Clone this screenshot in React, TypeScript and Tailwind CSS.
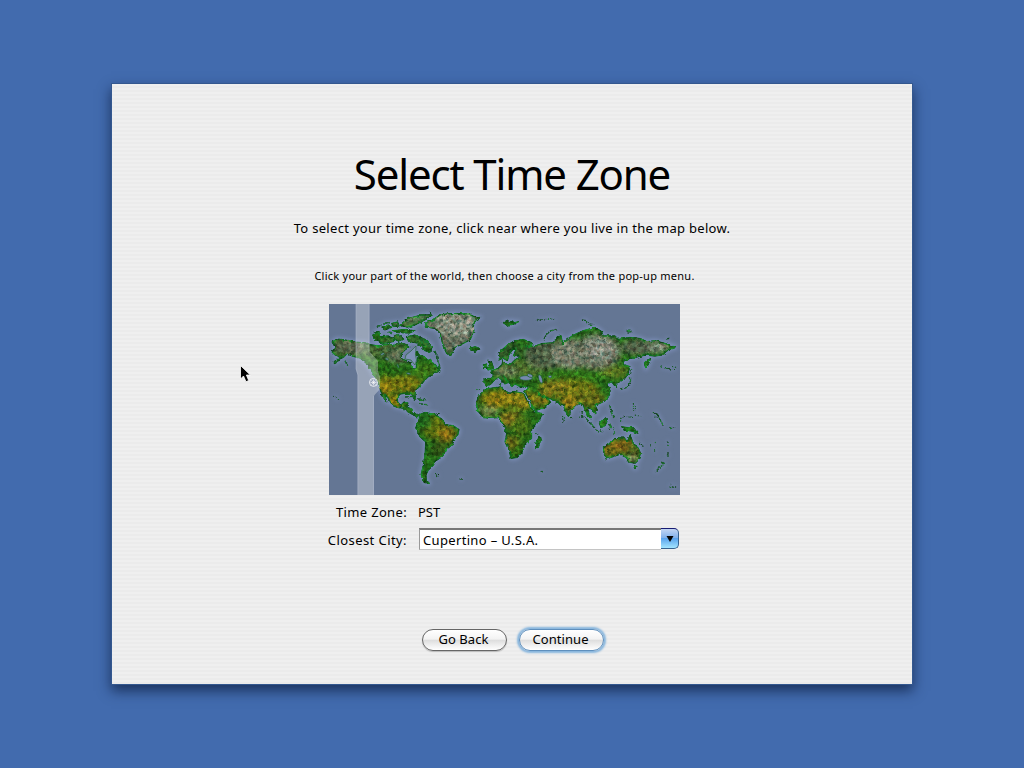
import React from "react";

type Landmass = { t: string; d: string };

const NW = "translate(325 300) scale(.33333)";
const SW = "translate(325 395) scale(.33333)";
const NC = "translate(420 300) scale(.33333)";
const NE = "translate(540 300) scale(.33333)";
const SE = "translate(500 395) scale(.33333)";

const land: Landmass[] = [
  // North and Central America
  { t: "", d: "M332 342L337 339L345 340L355 342L366 343L372 345L380 346L388 344L393 346L398 343L405 344L409 347L405 350L401 354L402 359L407 361L411 363L413 368L416 368L417 361L418 357L421 355L425 357L430 360L434 364L439 368L440 371L434 373L428 377L424 381L420 386L416 390L415 394L416 399L414 399L412 394L407 393L400 394L397 398L398 403L401 405L404 402L408 403L407 407L412 409L413 413L419 415L417 417L408 412L402 408L396 407L391 403L388 398L384 393L386 399L387 402L383 397L380 389L378 382L375 377L370 368L366 363L360 358L352 356L347 354L342 358L335 363L334 363L340 357L335 355L332 352L335 347Z" },
  // Arctic islands
  { t: NW, d: "M245 110L270 105L300 118L322 140L315 157L295 150L280 130L255 125Z" },
  { t: NW, d: "M225 75L250 55L290 45L322 45L300 60L270 75L245 82Z" },
  { t: NW, d: "M143 105L158 97L168 110L188 108L205 115L205 125L175 130L150 122Z" },
  { t: NW, d: "M168 82L190 75L200 82L180 90ZM200 70L218 66L222 78L205 80ZM205 92L240 88L270 92L255 99L215 98ZM208 106L222 104L236 118L222 124L210 118ZM145 100L162 94L163 102ZM265 158L278 154L280 166L266 168Z" },
  // South America
  { t: SW, d: "M285 58L300 52L330 58L350 72L362 88L384 92L402 104L399 118L387 135L382 150L365 162L352 185L337 194L325 210L310 225L303 240L304 256L313 265L297 262L288 240L295 210L300 180L302 140L285 125L272 98L280 80Z" },
  // Greenland, Iceland, Svalbard, British Isles
  { t: NC, d: "M15 70L45 55L60 45L80 42L110 40L150 42L165 52L182 52L165 62L160 80L162 95L150 120L130 130L110 140L100 150L92 168L80 160L70 140L65 120L60 100L45 85L20 82Z" },
  { t: NC, d: "M149 145L165 140L181 146L165 154ZM250 68L260 62L268 68L276 62L282 68L296 65L280 73L272 72L266 80L260 76ZM204 180L214 184L221 205L204 210L209 195ZM190 195L200 192L200 205L191 206Z" },
  // Eurasia
  { t: NC, d: "M192 235L215 235L220 225L213 213L235 205L245 195L248 180L255 192L275 190L287 178L300 172L290 166L280 168L288 148L280 147L268 162L262 183L250 174L238 180L235 160L262 135L285 122L310 118L335 128L330 138L316 140L345 138L368 130L400 128L412 110L424 108L428 135L440 120L460 105L490 92L525 82L545 95L550 108L585 108L595 118L630 112L660 115L680 125L705 122L735 130L768 142L745 150L725 165L705 168L675 165L650 172L630 175L608 185L615 195L630 200L625 222L612 238L590 250L592 260L583 256L575 245L562 252L571 270L568 285L560 300L540 310L525 315L532 330L525 342L515 327L502 323L508 345L514 358L502 345L488 312L475 308L458 325L445 349L435 330L430 315L410 307L390 295L365 287L352 275L368 292L385 297L392 307L370 325L345 332L320 285L312 273L323 268L325 260L300 260L285 252L275 260L262 240L250 228L264 248L255 252L240 234L225 237L215 250L200 260L192 250Z" },
  // Africa
  { t: NC, d: "M190 272L205 265L245 260L250 270L270 280L282 274L311 280L320 300L330 318L343 337L367 340L358 362L335 385L335 415L315 435L305 460L290 473L273 475L268 455L255 425L260 400L245 365L235 353L210 355L190 353L173 332L168 312L175 290Z" },
  { t: SE, d: "M107 145L118 125L124 130L115 158L107 158Z" },
  // Australia, Tasmania, New Guinea, Borneo
  { t: SE, d: "M310 155L325 147L337 139L345 130L360 132L370 125L382 140L390 120L400 145L415 160L422 175L415 195L405 205L390 202L378 187L360 178L340 185L318 192L312 175Z" },
  { t: SE, d: "M400 212L411 214L405 221ZM365 95L385 98L400 98L414 115L395 108L375 105ZM298 85L318 68L321 80L315 92L303 98Z" },
  // Kamchatka
  { t: NE, d: "M313 188L322 180L332 176L324 195L317 206Z" },
];

const islets: Landmass[] = [
  { t: NE, d: "M275 205L272 222M272 232L270 250L262 262L240 268M12 118L20 102L32 92L50 88M125 60L138 62L142 70M148 72L160 74M257 92L275 90M262 96L280 95M378 117L388 115" },
  { t: SE, d: "M257 68L270 84L285 100M285 105L310 110M325 88L332 92L327 104M330 32L333 50L342 66M487 200L492 208L480 216L465 232M123 230H129M470 56L490 92" },
  { t: SW, d: "M240 6L262 4L272 8M278 12L302 14M282 26L314 30M403 252L414 252" },
  { t: NC, d: "M0 46L34 40M2 62L20 56M0 110L22 130L36 156M0 118L15 140M246 240V248M240 250L246 256" },
  { t: NW, d: "M28 192L45 178L60 168M175 70L195 68M190 96L202 98M330 152L345 205M330 192L342 214M60 182L68 198M155 82L170 74" },
];

const specks: Landmass[] = [
  { t: NE, d: "M4 60H14M22 57H46M362 200L370 205H392M396 200L410 202M384 208H408" },
  { t: SE, d: "M415 136L420 148M424 144L430 156M458 52L475 58M462 62L478 68M508 97L526 98M512 93V102M450 150H456M466 140V148M464 158V170M500 136L506 144M502 150L508 152M500 180H508M504 174V186M188 62V84M194 66L192 78M210 68H214M236 50H250M238 66H252M246 52L248 68M400 24V44M406 30V46M362 80L362 70L374 66M380 64L400 68M404 60L424 64M508 276H532M512 266V280M105 118H120M340 96L344 116" },
  { t: SW, d: "M330 239L342 239M334 242L337 248M25 3L42 14M168 0L182 14M326 56L344 56" },
  { t: NC, d: "M165 283L180 285M168 268L180 270M302 262L312 262M48 216H62M350 60H364M374 58H388" },
];

const lakes = [
  [526, 378, 6.5, 2.4, 0],
  [530, 375.6, 3, 1.6, 20],
  [540.5, 379, 1.8, 4.5, -18],
  [550, 376.6, 1.7, 1.4, 0],
  [382.5, 354, 2, 1, -20],
  [387, 359, 2, 1, 20],
  [408.5, 373.5, 2.3, 0.8, 12],
  [398, 366, 0.7, 2.2, -20],
];

const patches: [number, number, number, number, string][] = [
  [350, 347, 19, 8, "#5d6b50"], [383, 350, 22, 8, "#4a7038"], [398, 356, 12, 7, "#627658"],
  [450, 330, 28, 22, "#6c7a66"], [457, 323, 20, 14, "#8e9a89"], [404, 338, 22, 6, "#397032"],
  [397, 317, 36, 9, "#5c8055"], [384, 371, 12, 8, "#2a7218"], [405, 384, 17, 9, "#7a7f14"],
  [386, 386, 9, 10, "#8a8013"], [425, 371, 13, 8, "#3e7e1b"], [395, 401, 9, 6, "#8f7f10"],
  [434, 427, 12, 12, "#5f7613"], [447, 434, 9, 8, "#927a17"], [440, 448, 8, 9, "#345c18"],
  [425, 421, 6, 8, "#247020"], [431, 468, 5, 16, "#256e19"], [503, 399, 23, 9, "#8c8214"],
  [523, 400, 13, 10, "#8a8719"], [489, 411, 10, 5, "#7a9150"], [512, 419, 13, 8, "#867a1e"],
  [521, 426, 9, 11, "#4a7518"], [512, 444, 8, 8, "#6c6d18"], [519, 451, 7, 7, "#336c15"],
  [541, 400, 10, 6, "#7e7d18"], [506, 352, 16, 10, "#315e28"], [520, 369, 25, 9, "#527a30"],
  [506, 372, 13, 5, "#6c8259"], [546, 355, 22, 15, "#52684a"], [571, 354, 21, 15, "#7c8873"],
  [597, 352, 24, 18, "#727f69"], [600, 349, 14, 11, "#8e998a"], [637, 347, 16, 8, "#56694d"],
  [657, 347, 12, 6, "#7d8a77"], [575, 375, 30, 6, "#347e1b"], [615, 372, 14, 6, "#607e24"],
  [570, 389, 29, 10, "#747e17"], [554, 388, 15, 8, "#827f1d"], [590, 399, 15, 8, "#6b751a"],
  [570, 403, 10, 7, "#8c7d18"], [612, 447, 12, 8, "#85741a"], [625, 446, 9, 7, "#80691a"],
  [636, 450, 7, 8, "#556b22"], [632, 459, 5, 4, "#8a9268"],
];

function WorldMap() {
  return (
    <svg viewBox="329 304 351 191" width="351" height="191" className="block" role="img">
      <defs>
        <clipPath id="world">
          {land.map((p, i) => <path key={i} d={p.d} transform={p.t || undefined} />)}
        </clipPath>
        <filter id="soft" filterUnits="userSpaceOnUse" x="329" y="304" width="351" height="191" colorInterpolationFilters="sRGB"><feGaussianBlur stdDeviation="2.4" /></filter>
        <filter id="halo" filterUnits="userSpaceOnUse" x="329" y="304" width="351" height="191" colorInterpolationFilters="sRGB"><feGaussianBlur stdDeviation="2" /></filter>
        <filter id="terrain" filterUnits="userSpaceOnUse" x="329" y="304" width="351" height="191" colorInterpolationFilters="sRGB">
          <feTurbulence type="fractalNoise" baseFrequency=".25" numOctaves="3" seed="8" result="noise" />
          <feColorMatrix in="noise" type="matrix" values="1.5 .6 0 0 -.5  1.3 0 0 0 -.12  1.4 0 .2 0 -.28  0 0 0 0 1" result="tone" />
          <feComposite in="SourceGraphic" in2="tone" operator="arithmetic" k1=".95" k2=".4" k3="0" k4="0" result="ground" />
          <feComposite in="ground" in2="SourceAlpha" operator="in" result="cut" />
          <feTurbulence type="fractalNoise" baseFrequency=".3" numOctaves="2" seed="3" result="rough" />
          <feDisplacementMap in="cut" in2="rough" scale="3.2" xChannelSelector="R" yChannelSelector="G" />
        </filter>
      </defs>
      <rect x="329" y="304" width="351" height="191" fill="#647694" />
      <g filter="url(#halo)" fill="#8194bd" stroke="#7d90bb" strokeLinejoin="round">
        {land.map((p, i) => <path key={i} d={p.d} transform={p.t || undefined} strokeWidth={p.t ? 11 : 3.7} />)}
        {islets.map((p, i) => <path key={"s" + i} d={p.d} transform={p.t} fill="none" strokeWidth="11" opacity=".7" />)}
        {specks.map((p, i) => <path key={"k" + i} d={p.d} transform={p.t} fill="none" strokeWidth="9" opacity=".5" />)}
      </g>
      <g filter="url(#terrain)">
        <g clipPath="url(#world)">
          <rect x="329" y="304" width="351" height="191" fill="#28711b" />
          <g filter="url(#soft)">
            {patches.map(([x, y, rx, ry, c], i) => <ellipse key={i} cx={x} cy={y} rx={rx} ry={ry} fill={c} />)}
          </g>
        </g>
        <g fill="none" stroke="#147a24" strokeLinejoin="round">
          {land.map((p, i) => <path key={i} d={p.d} transform={p.t || undefined} strokeWidth={p.t ? 4 : 1.3} />)}
        </g>
        <g fill="none" stroke="#1b7230">
          {islets.map((p, i) => <path key={i} d={p.d} transform={p.t} strokeWidth="5" strokeDasharray="13 2" />)}
          {specks.map((p, i) => <path key={"k" + i} d={p.d} transform={p.t} strokeWidth="4" strokeDasharray="5 3" />)}
        </g>
      </g>
      <g fill="#7588ae" stroke="#1b6326" strokeWidth=".7">
        {lakes.map(([x, y, rx, ry, a], i) => <ellipse key={i} cx={x} cy={y} rx={rx} ry={ry} transform={`rotate(${a} ${x} ${y})`} />)}
      </g>
      <path d="M416 346L411 351L406 355L405 359L411 360L415 365L416.5 360L415.5 355Z" fill="#7e91b6" stroke="#1b6326" strokeWidth=".6" />
      <path d="M355.7 304H369.5V351.5L378 361V371L380 377V389L375 394.5L374 396V495H357.5V375L355.7 369Z" fill="#fff" fillOpacity=".33" />
      <path d="M356.2 304V369L358 375V495M369 304V351.5M373.5 396V495" fill="none" stroke="#b9c5db" strokeOpacity=".28" />
      <g fill="none" stroke="#fff">
        <circle cx="373.5" cy="382.4" r="4" strokeOpacity=".75" />
        <path d="M373.5 379.5V385.5M370.5 382.5H376.5M371.5 380.5L375.5 384.5M375.5 380.5L371.5 384.5" strokeWidth=".75" strokeOpacity=".8" />
      </g>
    </svg>
  );
}

function AquaButton({ children, primary = false }: { children: string; primary?: boolean }) {
  return (
    <button
      className={
        "h-[22px] w-[85px] rounded-full border pb-[2px] pr-[2px] text-center text-[13px] leading-[18px] tracking-[0.08px] bg-[linear-gradient(#fff_0%,#f3f3f3_45%,#dedede_52%,#ececec_72%,#fff_100%)] " +
        (primary
          ? "border-[#5e8fbd] shadow-[0_0_2px_2px_#86b5dd]"
          : "border-[#666] shadow-[0_1px_1px_#bbb]")
      }
    >
      {children}
    </button>
  );
}

export default function App() {
  return (
    <div className="flex h-screen w-screen items-center justify-center overflow-hidden bg-[#426bae] font-['Noto_Sans','Open_Sans',sans-serif] text-black">
      <main className="relative flex h-[600px] w-[800px] flex-col items-center bg-[repeating-linear-gradient(#efefef_0px,#efefef_2px,#ebebeb_2px,#ebebeb_4px)] shadow-[0_0_0_1px_#34588f,0_6px_12px_1px_rgba(12,28,62,0.7)]">
        <h1 className="mt-[65px] h-[50px] whitespace-nowrap text-[42px] leading-[50px] tracking-[-1.15px]">Select Time Zone</h1>
        <p className="mt-[19px] h-5 whitespace-nowrap text-[13px] leading-5 tracking-[0.31px]">To select your time zone, click near where you live in the map below.</p>
        <p className="mr-[15px] mt-[28px] h-5 whitespace-nowrap text-[11px] leading-5 tracking-[0.25px]">Click your part of the world, then choose a city from the pop-up menu.</p>
        <div className="mr-[15px] mt-[18px] h-[191px] w-[351px]"><WorldMap /></div>
        <div className="mr-[15px] grid w-[351px] grid-cols-[78px_261px] gap-x-[11px] whitespace-nowrap text-[13px]">
          <span className="flex h-[33px] items-center justify-end pt-[3px] tracking-[0.34px]">Time Zone:</span>
          <span className="flex h-[33px] items-center pt-[3px]">PST</span>
          <span className="flex h-[22px] items-center justify-end pt-[4px] tracking-[0.42px]">Closest City:</span>
          <div className="flex h-[22px] w-[261px]">
            <div className="ml-px flex flex-1 items-center border border-r-0 border-t-2 border-[#c4c4c4] border-t-[#777] border-l-[#999] bg-white pl-[3px] pt-[3px] tracking-[0.34px]">Cupertino – U.S.A.</div>
            <div className="flex h-[21px] w-[18px] items-center justify-center rounded-r-[5px] border border-l-0 border-[#37628f] border-t-[#171b73] bg-[linear-gradient(#c2d5f3_0%,#83b2ec_45%,#5ba4ed_50%,#a3e5ff_100%)]">
              <svg width="8" height="6" viewBox="0 0 8 6"><path d="M.5 0H7.5L4 6Z" fill="#050505" /></svg>
            </div>
          </div>
        </div>
        <div className="ml-[2px] mt-[79px] flex gap-[12px]">
          <AquaButton>Go Back</AquaButton>
          <AquaButton primary>Continue</AquaButton>
        </div>
        <svg className="absolute left-[128px] top-[281px]" width="12" height="18" viewBox="0 0 12 18">
          <path d="M.5 .5V14L3.5 11L6 16.7L8.7 15.5L6.4 10H10.3Z" fill="#000" stroke="#fff" strokeWidth=".8" />
        </svg>
      </main>
    </div>
  );
}
